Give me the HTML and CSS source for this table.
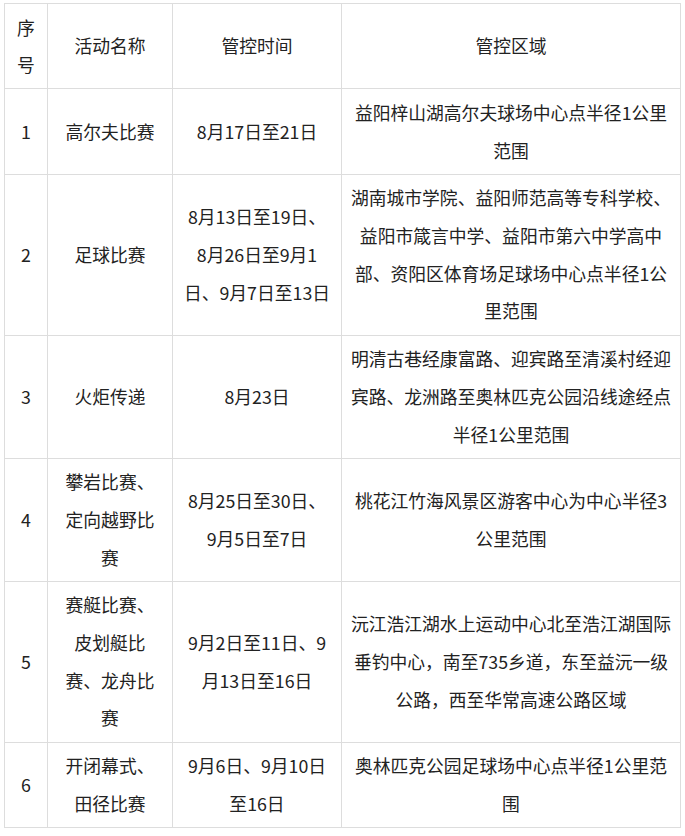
FILE: index.html
```html
<!DOCTYPE html>
<html lang="zh-CN">
<head>
<meta charset="utf-8">
<title>管控区域</title>
<link rel="stylesheet" href="styles.css">
</head>
<body>
<table class="ctl">
  <colgroup>
    <col class="c-no">
    <col class="c-name">
    <col class="c-time">
    <col class="c-area">
  </colgroup>
  <tr>
    <td>序<br>号</td>
    <td>活动名称</td>
    <td>管控时间</td>
    <td>管控区域</td>
  </tr>
  <tr>
    <td>1</td>
    <td>高尔夫比赛</td>
    <td>8月17日至21日</td>
    <td>益阳梓山湖高尔夫球场中心点半径1公里<br>范围</td>
  </tr>
  <tr>
    <td>2</td>
    <td>足球比赛</td>
    <td>8月13日至19日、<br>8月26日至9月1<br>日、9月7日至13日</td>
    <td>湖南城市学院、益阳师范高等专科学校、<br>益阳市箴言中学、益阳市第六中学高中<br>部、资阳区体育场足球场中心点半径1公<br>里范围</td>
  </tr>
  <tr>
    <td>3</td>
    <td>火炬传递</td>
    <td>8月23日</td>
    <td>明清古巷经康富路、迎宾路至清溪村经迎<br>宾路、龙洲路至奥林匹克公园沿线途经点<br>半径1公里范围</td>
  </tr>
  <tr>
    <td>4</td>
    <td>攀岩比赛、<br>定向越野比<br>赛</td>
    <td>8月25日至30日、<br>9月5日至7日</td>
    <td>桃花江竹海风景区游客中心为中心半径3<br>公里范围</td>
  </tr>
  <tr>
    <td>5</td>
    <td>赛艇比赛、<br>皮划艇比<br>赛、龙舟比<br>赛</td>
    <td>9月2日至11日、9<br>月13日至16日</td>
    <td>沅江浩江湖水上运动中心北至浩江湖国际<br>垂钓中心，南至735乡道，东至益沅一级<br>公路，西至华常高速公路区域</td>
  </tr>
  <tr>
    <td>6</td>
    <td>开闭幕式、<br>田径比赛</td>
    <td>9月6日、9月10日<br>至16日</td>
    <td>奥林匹克公园足球场中心点半径1公里范<br>围</td>
  </tr>
</table>
</body>
</html>
```
FILE: styles.css
```css
html, body {
  margin: 0;
  padding: 0;
  background: #ffffff;
}

body {
  padding: 3px 0 0 4px;
  font-family: "Noto Sans CJK SC", "Noto Sans", sans-serif;
  color: #222222;
}

.ctl {
  border-collapse: collapse;
  table-layout: fixed;
  width: 676px;
}

.c-no { width: 43px; }
.c-name { width: 125px; }
.c-time { width: 169px; }
.c-area { width: 339px; }

.ctl td {
  border: 1px solid #dddddd;
  padding: 4.5px 2px;
  font-size: 17.8px;
  line-height: 37.7px;
  text-align: center;
  vertical-align: middle;
  white-space: nowrap;
  overflow: hidden;
}
```
